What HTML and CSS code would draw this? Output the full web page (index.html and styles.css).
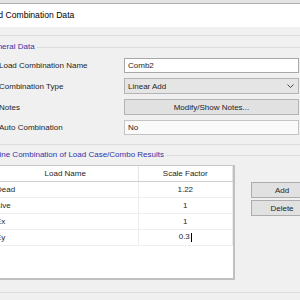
FILE: index.html
```html
<!DOCTYPE html>
<html lang="en">
<head>
    <meta charset="UTF-8">
    <title>Load Combination Data</title>
    <link rel="stylesheet" href="styles.css">
</head>
<body>
    <div class="chrome"></div>
    <div class="titlebar"><div class="title">Load Combination Data</div></div>
    <div class="band"></div>

    <div class="dialog">
        <fieldset class="group">
            <legend>General Data</legend>
            <div class="form-rows">
                <div class="label">Load Combination Name</div>
                <div class="field text-field">Comb2</div>

                <div class="label">Combination Type</div>
                <div class="field select-field">
                    <span>Linear Add</span>
                    <svg class="chevron" width="7" height="4" viewBox="0 0 7 4"><polyline points="0.5,0.5 3.5,3.5 6.5,0.5" fill="none" stroke="#444" stroke-width="1"/></svg>
                </div>

                <div class="label">Notes</div>
                <button class="field notes-btn">Modify/Show Notes...</button>

                <div class="label">Auto Combination</div>
                <div class="field readonly-field">No</div>
            </div>
        </fieldset>

        <fieldset class="group group-define">
            <legend>Define Combination of Load Case/Combo Results</legend>
            <div class="combo-area">
                <div class="grid-box">
                    <table class="grid">
                        <tr><th class="col-name">Load Name</th><th>Scale Factor</th></tr>
                        <tr><td>Dead</td><td class="num">1.22</td></tr>
                        <tr><td>Live</td><td class="num">1</td></tr>
                        <tr><td>Ex</td><td class="num">1</td></tr>
                        <tr><td>Ey</td><td class="num">0.3<span class="caret"></span></td></tr>
                    </table>
                </div>
                <div class="side-buttons">
                    <button class="btn">Add</button>
                    <button class="btn">Delete</button>
                </div>
            </div>
        </fieldset>
    </div>
</body>
</html>
```

FILE: styles.css
```css
* {
    box-sizing: border-box;
}
body {
    margin: 0;
    width: 300px;
    height: 300px;
    overflow: hidden;
    background: #f0f0f0;
    font-family: "Liberation Sans", Arial, sans-serif;
    font-size: 8px;
    color: #1e1e1e;
}
.chrome {
    height: 4px;
    background: #e4e4e4;
    border-bottom: 1px solid #b0b0b0;
}
.titlebar {
    height: 23px;
    background: #fff;
    line-height: 23px;
    font-size: 8.6px;
    color: #000;
    white-space: nowrap;
}
.title {
    margin-left: -16px;
}
.band {
    height: 9px;
    border-bottom: 1px solid #dcdcdc;
}
.dialog {
    margin-left: -22px;
    width: 329px;
}
.group {
    margin: 6px 0 0;
    padding: 6px 0 9px;
    border: 1px solid #dcdcdc;
    min-width: 0;
}
.group legend {
    margin-left: 6px;
    padding: 0 2px;
    line-height: 10px;
    color: #3333aa;
}
.group-define {
    margin-top: 5px;
    padding: 5px 0 12px;
}
.form-rows {
    display: grid;
    grid-template-columns: 125px 175px;
    grid-template-rows: 15px 16px 16px 15px;
    row-gap: 5px;
    padding-left: 20px;
}
.label {
    display: flex;
    align-items: center;
    white-space: nowrap;
}
.field {
    display: flex;
    align-items: center;
    padding: 0 3px;
    font: inherit;
    color: #1e1e1e;
}
.text-field {
    background: #fff;
    border: 1px solid #a8a8a8;
}
.select-field {
    justify-content: space-between;
    background: #e5e5e5;
    border: 1px solid #b4b4b4;
}
.chevron {
    margin-right: 1px;
}
.notes-btn {
    justify-content: center;
    background: #e1e1e1;
    border: 1px solid #b4b4b4;
}
.readonly-field {
    background: #fafafa;
    border: 1px solid #c4c4c4;
}
.combo-area {
    display: flex;
    align-items: flex-start;
    padding-left: 13px;
}
.grid-box {
    flex-shrink: 0;
    width: 243px;
    height: 115px;
    background: #fff;
    border: 1px solid #c8c8c8;
    border-right: 2px solid #c0c0c0;
    border-bottom: 2px solid #c0c0c0;
}
.grid {
    width: 100%;
    border-collapse: collapse;
}
.grid th {
    height: 15px;
    padding: 0;
    font-weight: normal;
    text-align: center;
    border-bottom: 1px solid #d0d0d0;
    border-right: 1px solid #e4e4e4;
}
.grid .col-name {
    width: 145px;
}
.grid td {
    height: 16px;
    padding: 0 3px;
    border-bottom: 1px solid #f0f0f0;
    border-right: 1px solid #ececec;
}
.grid td.num {
    text-align: center;
}
.caret {
    display: inline-block;
    width: 1px;
    height: 9px;
    margin-left: 1px;
    background: #000;
    vertical-align: middle;
}
.side-buttons {
    flex-shrink: 0;
    display: flex;
    flex-direction: column;
    gap: 2px;
    margin: 17px 0 0 16px;
}
.btn {
    width: 62px;
    height: 16px;
    padding: 0;
    background: #e1e1e1;
    border: 1px solid #adadad;
    font: inherit;
    color: #1e1e1e;
}
```
